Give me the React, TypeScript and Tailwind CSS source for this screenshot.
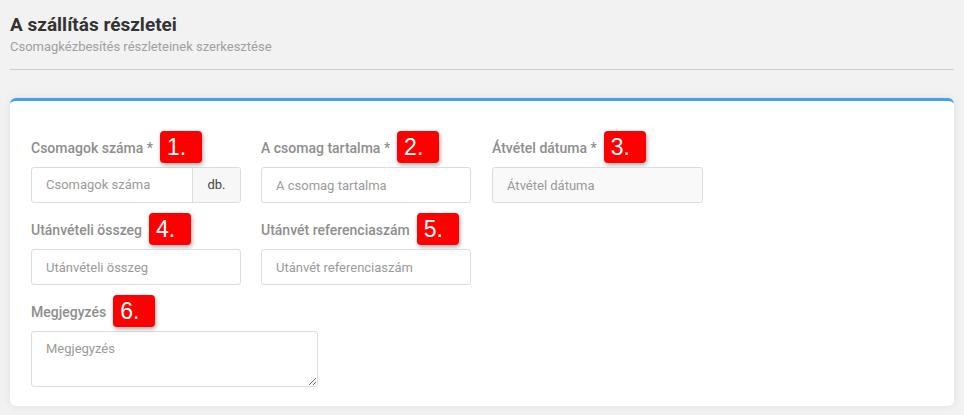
import React from 'react';

// Red numbered marker placed after each field label.
const Badge = ({ n }: { n: number }) => (
  <span className="ml-[7px] flex h-8 w-[42px] items-center rounded-[4px] bg-[#ff0000] pl-[7px] font-['Liberation_Sans',Arial,sans-serif] text-[23px] leading-none text-white shadow-[1px_2px_4px_rgba(0,0,0,0.35)]">
    {n}.
  </span>
);

const Label = ({ text, n }: { text: string; n: number }) => (
  <div className="flex h-8 items-center">
    <label className="pt-[3px] text-[14px] font-medium text-[#8e8e8e]">{text}</label>
    <Badge n={n} />
  </div>
);

const inputCls =
  "mt-1 h-9 w-[210px] rounded-[3px] border border-[#dcdcdc] px-[14px] text-[13px] text-[#555] placeholder:text-[#9a9a9a] outline-none";

const App: React.FC = () => {
  return (
    <div className="min-h-screen bg-[#f2f2f2] px-[10px] pt-[13px] pb-[9px] font-['Roboto',sans-serif]">
      <h1 className="text-[19px] font-bold leading-6 text-[#333]">A szállítás részletei</h1>
      <p className="mt-[2px] text-[13px] leading-4 text-[#a0a0a0]">Csomagkézbesítés részleteinek szerkesztése</p>
      <div className="mt-[14px] h-px bg-[#cccccc]" />

      <div className="mt-[28px] rounded-[6px] border-t-[3px] border-[#42a1ec] bg-white px-[21px] pt-[30px] pb-[19px] shadow-[0_0_8px_rgba(0,0,0,0.08)]">
        <div className="flex gap-x-5">
          <div>
            <Label text="Csomagok száma *" n={1} />
            <div className="mt-1 flex h-9 w-[210px] overflow-hidden rounded-[3px] border border-[#dcdcdc]">
              <input placeholder="Csomagok száma" className="min-w-0 flex-1 px-[14px] text-[13px] text-[#555] placeholder:text-[#9a9a9a] outline-none" />
              <span className="flex w-12 items-center justify-center border-l border-[#dcdcdc] bg-[#f7f7f7] text-[13px] text-[#444]">db.</span>
            </div>
          </div>
          <div>
            <Label text="A csomag tartalma *" n={2} />
            <input placeholder="A csomag tartalma" className={inputCls} />
          </div>
          <div className="ml-px">
            <Label text="Átvétel dátuma *" n={3} />
            <input placeholder="Átvétel dátuma" disabled className={`${inputCls} w-[211px] bg-[#f9f9f9]`} />
          </div>
        </div>

        <div className="mt-[10px] flex gap-x-5">
          <div>
            <Label text="Utánvételi összeg" n={4} />
            <input placeholder="Utánvételi összeg" className={inputCls} />
          </div>
          <div>
            <Label text="Utánvét referenciaszám" n={5} />
            <input placeholder="Utánvét referenciaszám" className={inputCls} />
          </div>
        </div>

        <div className="mt-[10px]">
          <Label text="Megjegyzés" n={6} />
          <textarea
            placeholder="Megjegyzés"
            className="mt-1 block h-14 w-[287px] rounded-[3px] border border-[#dcdcdc] px-[14px] py-[7px] text-[13px] text-[#555] placeholder:text-[#9a9a9a] outline-none"
          />
        </div>
      </div>
    </div>
  );
};

export default App;
